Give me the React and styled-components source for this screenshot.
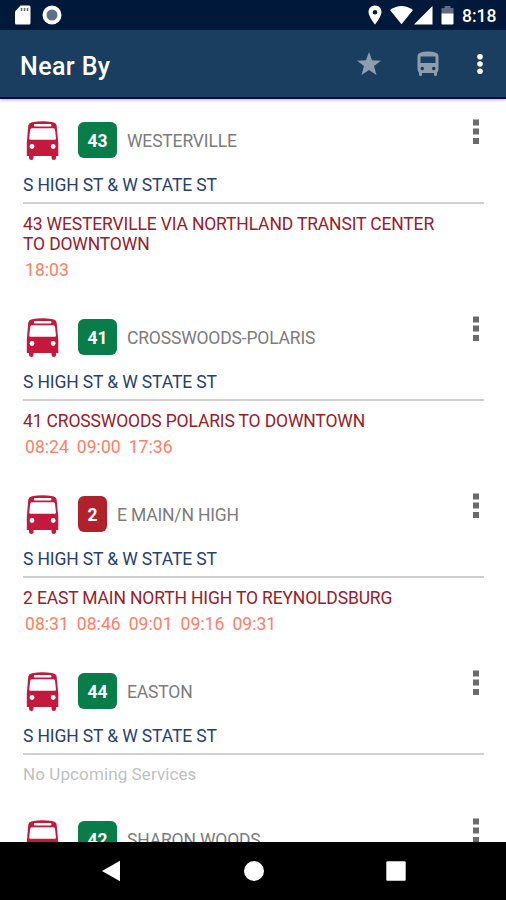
import React from 'react';
import styled, { createGlobalStyle } from 'styled-components';

const GlobalStyle = createGlobalStyle`
  body {
    margin: 0;
    background: #fff;
    font-family: Roboto, sans-serif;
  }
`;

const Screen = styled.div`
  width: 506px;
  height: 900px;
  display: flex;
  flex-direction: column;
  overflow: hidden;
  background: #fff;
`;

const StatusBar = styled.div`
  height: 30px;
  flex: none;
  display: flex;
  align-items: center;
  box-sizing: border-box;
  padding: 0 9px 0 14px;
  background: #001839;
  color: #fff;
`;

const StatusIcon = styled.svg`
  display: block;
  flex: none;
  width: ${(p) => p.$w}px;
  height: 20px;
  margin-left: ${(p) => p.$gap || 0}px;
`;

const Clock = styled.div`
  width: 35px;
  margin-left: 8px;
  padding-top: 2px;
  font-size: 17.5px;
  line-height: 20px;
  font-weight: 500;
  white-space: nowrap;
`;

const Spacer = styled.div`
  flex: 1;
`;

const AppBar = styled.div`
  height: 69px;
  flex: none;
  display: flex;
  align-items: center;
  box-sizing: border-box;
  padding: 0 23px 0 20px;
  background: #1a3e60;
  border-bottom: 2px solid #06084e;
  box-shadow: 0 1px 3px rgba(40, 20, 80, 0.35);
  z-index: 1;
`;

const Title = styled.h1`
  flex: 1;
  margin: 0;
  padding-top: 6px;
  font-size: 25px;
  line-height: 30px;
  font-weight: 500;
  letter-spacing: 0.4px;
  color: #fff;
`;

const BarIcon = styled.svg`
  display: block;
  width: ${(p) => p.$w}px;
  height: 28px;
  margin-left: ${(p) => p.$gap || 0}px;
  margin-top: 1px;
`;

const List = styled.div`
  flex: 1;
  min-height: 0;
  overflow: hidden;
`;

const Item = styled.section`
  height: ${(p) => p.$height}px;
  box-sizing: border-box;
  padding: 20px 22px 0 23px;
`;

const ItemHeader = styled.div`
  height: 53px;
  display: flex;
  align-items: flex-start;
`;

const BusIcon = styled.svg`
  display: block;
  flex: none;
  width: 39px;
  height: 40px;
  margin: 2px 16px 0 0;
`;

const Badge = styled.div`
  height: 36px;
  width: ${(p) => (p.$narrow ? 29 : 39)}px;
  margin: 3px 10px 0 0;
  flex: none;
  border-radius: 6px;
  background: ${(p) => p.$color};
  color: #fff;
  font-size: 17.5px;
  line-height: 38px;
  font-weight: 700;
  text-align: center;
`;

const RouteName = styled.div`
  flex: 1;
  padding-top: 12px;
  font-size: 17.5px;
  line-height: 21px;
  letter-spacing: -0.17px;
  white-space: nowrap;
  color: #7c7c7c;
`;

const MoreDots = styled.svg`
  display: block;
  flex: none;
  width: 6px;
  height: 26px;
  margin-right: 5px;
`;

const StopName = styled.div`
  height: 32px;
  box-sizing: border-box;
  padding-top: 3px;
  border-bottom: 2px solid #d0d0d0;
  font-size: 17.5px;
  line-height: 20px;
  letter-spacing: -0.13px;
  color: #27406f;
  white-space: nowrap;
`;

const Headsign = styled.div`
  width: 430px;
  padding-top: 10px;
  font-size: 17.5px;
  line-height: 20px;
  letter-spacing: -0.15px;
  color: #982029;
`;

const Times = styled.div`
  display: flex;
  gap: 8px;
  padding: 6px 0 0 2px;
  font-size: 17.5px;
  line-height: 20px;
  letter-spacing: 0.05px;
  color: #ff7e63;
`;

const NoServices = styled.div`
  padding-top: 9px;
  font-size: 17px;
  line-height: 20px;
  letter-spacing: 0.1px;
  color: #c0c0c0;
`;

const NavBar = styled.div`
  height: 58px;
  flex: none;
  display: flex;
  align-items: center;
  justify-content: space-between;
  box-sizing: border-box;
  padding: 0 100px 0 101px;
  background: #000;
  z-index: 1;
`;

const NavIcon = styled.svg`
  display: block;
  width: 20px;
  height: 22px;
`;

const GREEN = '#087d4a';
const RED = '#b0222b';

const services = [
  {
    number: '43',
    color: GREEN,
    name: 'WESTERVILLE',
    headsign: '43 WESTERVILLE VIA NORTHLAND TRANSIT CENTER TO DOWNTOWN',
    times: ['18:03'],
    height: 197,
  },
  {
    number: '41',
    color: GREEN,
    name: 'CROSSWOODS-POLARIS',
    headsign: '41 CROSSWOODS POLARIS TO DOWNTOWN',
    times: ['08:24', '09:00', '17:36'],
    height: 177,
  },
  {
    number: '2',
    color: RED,
    name: 'E MAIN/N HIGH',
    headsign: '2 EAST MAIN NORTH HIGH TO REYNOLDSBURG',
    times: ['08:31', '08:46', '09:01', '09:16', '09:31'],
    height: 177,
  },
  { number: '44', color: GREEN, name: 'EASTON', times: [], height: 148 },
  { number: '42', color: GREEN, name: 'SHARON WOODS', times: [], height: 148 },
];

const RedBus = () => (
  <BusIcon viewBox="0 0 39 40">
    <path
      fill="#c3193c"
      fillRule="evenodd"
      d="M5.3 4.2Q6 1.8 9 1.2Q19.500 -.9 30 1.2Q33 1.8 33.600 4.2L35.300 22V35H33V37Q33 39 31 39Q28.500 39 28.500 37V35H10.500V37Q10.500 39 8.500 39Q6 39 6 37V35H3.800V22ZM12 3Q10.800 3 10.800 4.200Q10.800 5.400 12 5.400H27.300Q28.500 5.400 28.500 4.200Q28.500 3 27.300 3ZM8.700 7.200Q7.400 7.200 7.200 8.700L6.200 17.500Q6.200 18.800 7.500 18.800H31.700Q33 18.800 33 17.500L32 8.700Q31.800 7.200 30.500 7.200Z"
    />
    <circle cx="9" cy="25.500" r="2.400" fill="#fff" />
    <circle cx="30.200" cy="25.500" r="2.400" fill="#fff" />
  </BusIcon>
);

const ServiceItem = ({ service }) => (
  <Item $height={service.height}>
    <ItemHeader>
      <RedBus />
      <Badge $color={service.color} $narrow={service.number.length === 1}>
        {service.number}
      </Badge>
      <RouteName>{service.name}</RouteName>
      <MoreDots viewBox="0 0 6 26" fill="#6b6b6b">
        <rect y="0.500" width="6" height="6" />
        <rect y="9.500" width="6" height="6" />
        <rect y="19" width="6" height="6" />
      </MoreDots>
    </ItemHeader>
    <StopName>S HIGH ST &amp; W STATE ST</StopName>
    {service.times.length > 0 ? (
      <>
        <Headsign>{service.headsign}</Headsign>
        <Times>
          {service.times.map((time) => (
            <span key={time}>{time}</span>
          ))}
        </Times>
      </>
    ) : (
      <NoServices>No Upcoming Services</NoServices>
    )}
  </Item>
);

const App = () => {
  return (
    <Screen>
      <GlobalStyle />
      <StatusBar>
        <StatusIcon $w={18} viewBox="0 0 18 20">
          <path fill="#fff" d="M6.500 .5H15Q16.500 .5 16.500 2V18Q16.500 19.500 15 19.500H2.500Q1 19.500 1 18V6.500Z" />
          <path stroke="#5b6270" strokeWidth="1.500" d="M7.500 3V6M10.500 3V6M13.500 3V6" />
        </StatusIcon>
        <StatusIcon $w={20} $gap={10} viewBox="0 0 20 20">
          <circle cx="10" cy="10" r="7.500" fill="#5c7088" stroke="#fff" strokeWidth="4" />
        </StatusIcon>
        <Spacer />
        <StatusIcon $w={14} viewBox="0 0 14 20">
          <path
            fill="#fff"
            fillRule="evenodd"
            d="M7 .5C3.200 .5 .5 3.400 .5 7C.5 11.500 7 19.500 7 19.500S13.500 11.500 13.500 7C13.500 3.400 10.800 .5 7 .5ZM7 5A2.300 2.300 0 1 1 7 9.600A2.300 2.300 0 1 1 7 5Z"
          />
        </StatusIcon>
        <StatusIcon $w={23} $gap={8} viewBox="0 0 23 20">
          <path fill="#fff" d="M0 5Q11.500 -3 23 5L11.500 19.300Z" />
        </StatusIcon>
        <StatusIcon $w={19} $gap={1} viewBox="0 0 19 20">
          <path fill="#fff" d="M0 19.500L18.500 1V19.500Z" />
        </StatusIcon>
        <StatusIcon $w={13} $gap={8} viewBox="0 0 13 20">
          <path fill="#5d6b83" d="M3.500 1H9.500V3H12.500V9H.5V3H3.500Z" />
          <path fill="#fff" d="M.5 8.500H12.500V18.500Q12.500 19.500 11.500 19.500H1.500Q.5 19.500 .5 18.500Z" />
        </StatusIcon>
        <Clock>8:18</Clock>
      </StatusBar>

      <AppBar>
        <Title>Near By</Title>
        <BarIcon $w={24} viewBox="0 0 24 28">
          <path fill="#8c9dac" d="M12 2L15 10.300L24 10.700L17 16.100L19.500 25L12 20L4.500 25L7 16.100L0 10.700L9 10.300Z" />
        </BarIcon>
        <BarIcon $w={22} $gap={36} viewBox="0 0 22 28">
          <path
            fill="#8c9dac"
            fillRule="evenodd"
            d="M.5 6Q.5 1.500 11 1.500T21.500 6V19Q21.500 21 20 22.500V24.500Q20 26 18.500 26Q17 26 17 24.500V23H5V24.500Q5 26 3.500 26Q2 26 2 24.500V22.500Q.5 21 .5 19ZM3.500 6.500V13H18.500V6.500ZM5.300 16.800A1.800 1.800 0 1 0 5.300 20.400A1.800 1.800 0 1 0 5.300 16.800ZM16.700 16.800A1.800 1.800 0 1 0 16.700 20.400A1.800 1.800 0 1 0 16.700 16.800Z"
          />
        </BarIcon>
        <BarIcon $w={6} $gap={38} viewBox="0 0 6 28" fill="#fff">
          <circle cx="3" cy="6.700" r="2.800" />
          <circle cx="3" cy="14" r="2.800" />
          <circle cx="3" cy="21.300" r="2.800" />
        </BarIcon>
      </AppBar>

      <List>
        {services.map((service) => (
          <ServiceItem key={service.number} service={service} />
        ))}
      </List>

      <NavBar>
        <NavIcon viewBox="0 0 20 22">
          <path fill="#fff" d="M1 11L19 .8V21.200Z" />
        </NavIcon>
        <NavIcon viewBox="0 0 20 22">
          <circle cx="10" cy="11" r="10" fill="#fff" />
        </NavIcon>
        <NavIcon viewBox="0 0 20 22">
          <rect x=".3" y="1.300" width="19.400" height="19.400" rx="1" fill="#fff" />
        </NavIcon>
      </NavBar>
    </Screen>
  );
};

export default App;
